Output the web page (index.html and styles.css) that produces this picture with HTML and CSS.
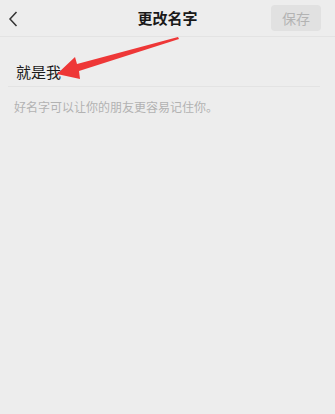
FILE: index.html
```html
<!DOCTYPE html>
<html lang="zh">
<head>
<meta charset="utf-8">
<link rel="stylesheet" href="styles.css">
</head>
<body>
<div class="page">
  <header class="header">
    <div class="left">
      <svg class="back" width="10" height="16" viewBox="0 0 10 16"><path d="M8.5 1 L2 8 L8.5 15" fill="none" stroke="#333" stroke-width="1.5"/></svg>
    </div>
    <div class="title">更改名字</div>
    <div class="right"><span class="save">保存</span></div>
  </header>
  <div class="field"><span class="name">就是我</span></div>
  <p class="hint">好名字可以让你的朋友更容易记住你。</p>
  <svg class="arrow" width="335" height="100" viewBox="0 0 335 100">
    <polygon points="178,37 77,64 75,57 57,74 80,79 79,71 179,39" fill="#ee3737"/>
  </svg>
</div>
</body>
</html>
```
FILE: styles.css
```css
html, body {
  margin: 0;
  padding: 0;
  background: #ededed;
}
body {
  font-family: "Noto Sans CJK SC", "Noto Sans", sans-serif;
  color: #1a1a1a;
}
.page {
  position: relative;
  width: 335px;
  height: 414px;
  overflow: hidden;
}
.header {
  height: 36px;
  display: grid;
  grid-template-columns: 1fr auto 1fr;
  align-items: center;
  border-bottom: 1px solid #e3e3e3;
}
.left {
  padding-left: 8px;
  display: flex;
  align-items: center;
  padding-top: 1px;
}
.title {
  font-size: 15px;
  font-weight: 600;
  color: #191919;
  line-height: 20px;
}
.right {
  display: flex;
  justify-content: flex-end;
  padding-right: 14px;
}
.save {
  width: 50px;
  height: 26px;
  border-radius: 4px;
  background: #e1e1e1;
  color: #b3b3b3;
  font-size: 14px;
  line-height: 26px;
  text-align: center;
}
.field {
  margin: 0 15px 0 8px;
  padding: 22px 0 3px 8px;
  border-bottom: 1px solid #e3e3e3;
}
.name {
  font-size: 15px;
  line-height: 20px;
  color: #1a1a1a;
}
.hint {
  margin: 11px 0 0 14px;
  font-size: 12px;
  line-height: 17px;
  color: #b2b2b2;
}
.arrow {
  position: absolute;
  left: 0;
  top: 0;
}
```
